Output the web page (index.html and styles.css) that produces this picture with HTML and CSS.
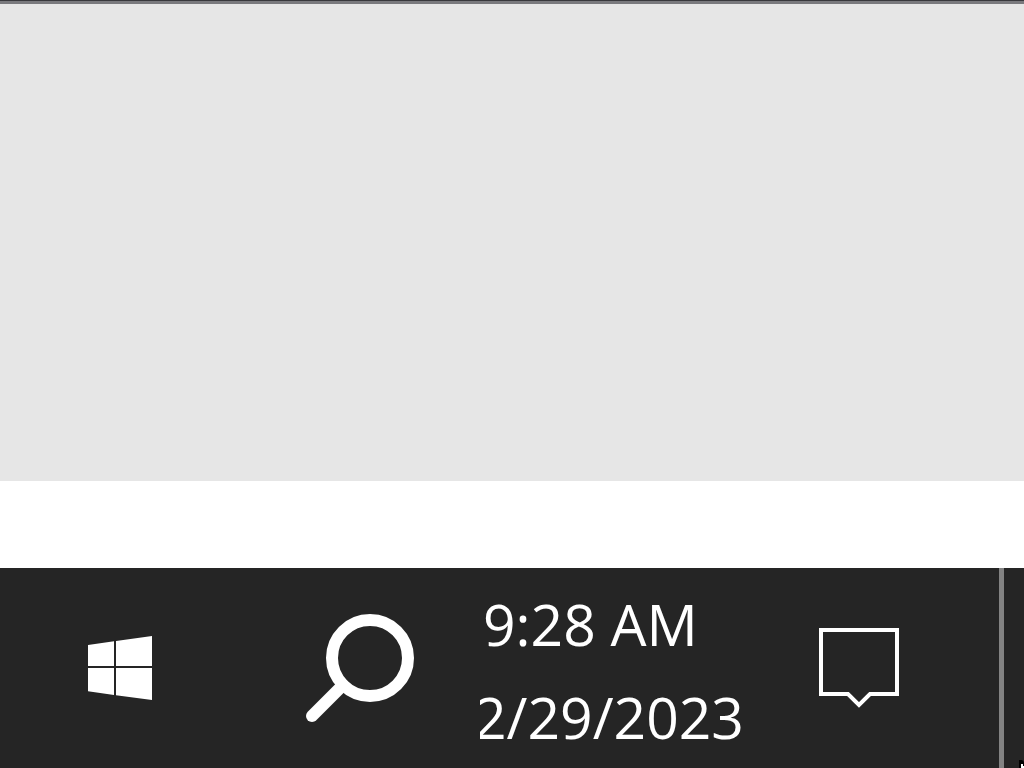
FILE: index.html
```html
<!DOCTYPE html>
<html lang="en">
<head>
<meta charset="utf-8">
<title>Desktop</title>
<link rel="stylesheet" href="styles.css">
</head>
<body>
<main class="window"></main>
<div class="window-footer"></div>
<footer class="taskbar">
  <button class="item" aria-label="Start">
    <svg width="64" height="64" viewBox="0 0 64 64" fill="#fff"><path d="M0 9 26 5.300V30H0zM28 5 64 0V30H28zM0 32H26V59L0 55.300zM28 32H64V64L28 59.300z"/></svg>
  </button>
  <button class="item" aria-label="Search">
    <svg width="108" height="108" viewBox="0 0 108 108" fill="none" stroke="#fff"><circle cx="64" cy="44" r="38" stroke-width="12"/><path d="M37 71 6 102" stroke-width="12" stroke-linecap="round"/></svg>
  </button>
  <button class="clock"><span class="time">9:28 AM</span><span class="date">2/29/2023</span></button>
  <button class="item action" aria-label="Notifications">
    <svg width="80" height="80" viewBox="0 0 80 80" fill="none" stroke="#fff" stroke-width="4"><path d="M2 2H78V66H51L40 77 29 66H2z"/></svg>
  </button>
  <button class="show-desktop" aria-label="Show desktop"></button>
</footer>
<svg class="pointer" width="5" height="8" viewBox="0 0 5 8"><path d="M0 0H3L5 2V8H0z" fill="#000"/><path d="M2 4H4V6H5V8H2z" fill="#fff"/></svg>
</body>
</html>
```
FILE: styles.css
```css
* { box-sizing: border-box; }
body {
  display: flex;
  flex-direction: column;
  min-height: 100vh;
  margin: 0;
  background: #fff;
  font-family: "Open Sans", "Noto Sans", sans-serif;
}
button {
  margin: 0;
  padding: 0;
  border: 0;
  background: none;
  color: #fff;
  font: inherit;
}
svg { display: block; }
.window {
  flex: 1;
  border-top: 1px solid #38383c;
  background: linear-gradient(#79797d 3px, #e6e6e6 3px);
}
.window-footer { height: 87px; }
.taskbar {
  display: grid;
  grid-template-columns: 240px 240px 1fr 240px 25px;
  height: 200px;
  background: #252525;
}
.item {
  display: flex;
  align-items: center;
  justify-content: center;
}
.action { padding-right: 40px; }
.clock {
  display: flex;
  flex-direction: column;
  justify-content: center;
  overflow: hidden;
  padding-top: 6px;
  font-size: 57px;
  line-height: 93px;
  text-align: left;
  white-space: nowrap;
}
.time { padding-left: 3px; }
.date { margin-left: -6px; }
.show-desktop { border-left: 5px solid #838383; }
.pointer {
  position: absolute;
  right: 0;
  bottom: 0;
}
```
